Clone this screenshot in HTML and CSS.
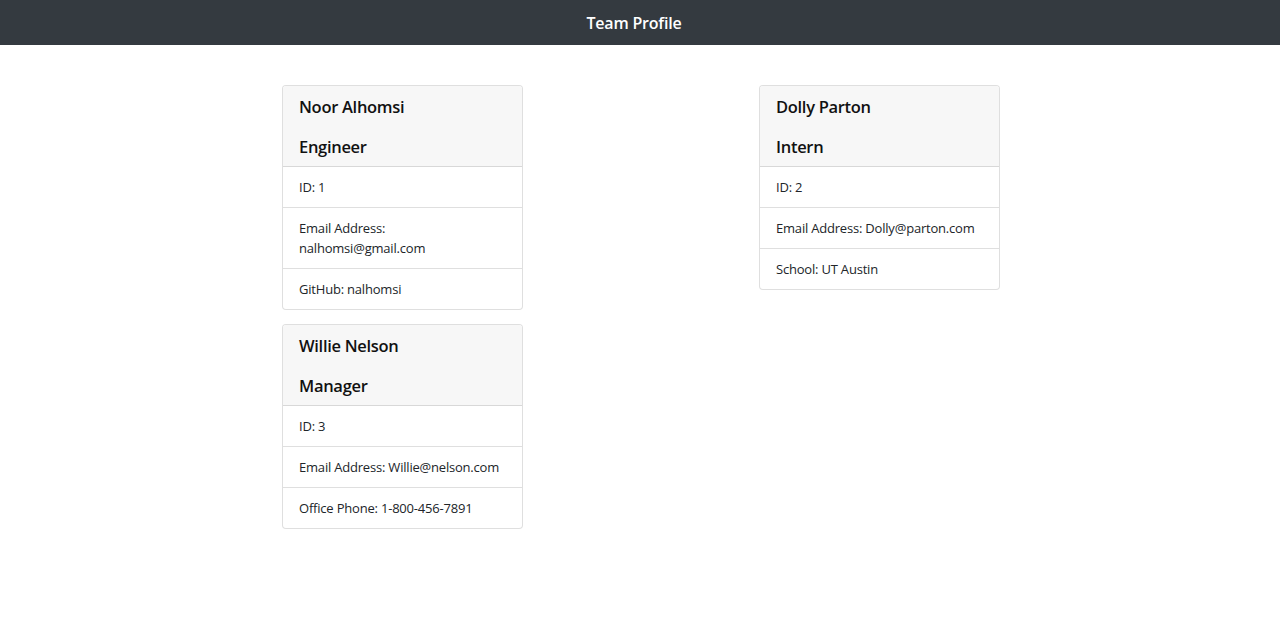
FILE: index.html
```html
<!DOCTYPE html>
<html lang="en">
<head>
<meta charset="utf-8">
<title>Team Profile</title>
<link rel="stylesheet" href="styles.css">
</head>
<body>
<header class="navbar">
  <h1 class="navbar-title">Team Profile</h1>
</header>
<main class="team">
  <div class="column">
    <section class="card">
      <div class="card-header">
        <h2 class="card-title">Noor Alhomsi</h2>
        <h3 class="card-role">Engineer</h3>
      </div>
      <ul class="list">
        <li class="list-item">ID: 1</li>
        <li class="list-item">Email Address: nalhomsi@gmail.com</li>
        <li class="list-item">GitHub: nalhomsi</li>
      </ul>
    </section>
    <section class="card">
      <div class="card-header">
        <h2 class="card-title">Willie Nelson</h2>
        <h3 class="card-role">Manager</h3>
      </div>
      <ul class="list">
        <li class="list-item">ID: 3</li>
        <li class="list-item">Email Address: Willie@nelson.com</li>
        <li class="list-item">Office Phone: 1-800-456-7891</li>
      </ul>
    </section>
  </div>
  <div class="column">
    <section class="card">
      <div class="card-header">
        <h2 class="card-title">Dolly Parton</h2>
        <h3 class="card-role">Intern</h3>
      </div>
      <ul class="list">
        <li class="list-item">ID: 2</li>
        <li class="list-item">Email Address: Dolly@parton.com</li>
        <li class="list-item">School: UT Austin</li>
      </ul>
    </section>
  </div>
</main>
</body>
</html>
```

FILE: styles.css
```css
* { box-sizing: border-box; }
html, body { margin: 0; padding: 0; }
body {
  font-family: "Segoe UI", "Open Sans", "Noto Sans", sans-serif;
  font-size: 14px;
  line-height: 20px;
  color: #212529;
  background: #fff;
}
.navbar {
  height: 45px;
  background: #343a40;
  display: flex;
  align-items: center;
  justify-content: center;
}
.navbar-title {
  margin: 0 12px 0 0;
  font-size: 16px;
  font-weight: 600;
  letter-spacing: -0.2px;
  color: #fff;
  line-height: 24px;
}
.team {
  width: 718px;
  margin: 40px 0 0 calc(50% - 358px);
  display: flex;
  justify-content: space-between;
  align-items: flex-start;
}
.column {
  width: 241px;
  display: flex;
  flex-direction: column;
  gap: 14px;
}
.card {
  border: 1px solid rgba(0, 0, 0, 0.125);
  border-radius: 4px;
  overflow: hidden;
  background: #fff;
}
.card-header {
  background: #f7f7f7;
  padding: 11px 16px 9px;
  border-bottom: 1px solid rgba(0, 0, 0, 0.125);
  display: flex;
  flex-direction: column;
  gap: 20px;
}
.card-title, .card-role {
  margin: 0;
  font-size: 16.5px;
  font-weight: 600;
  letter-spacing: -0.3px;
  line-height: 20px;
  color: #111;
}
.list { list-style: none; margin: 0; padding: 0; }
.list-item {
  padding: 10px 16px;
  border-bottom: 1px solid rgba(0, 0, 0, 0.125);
  font-size: 13px;
  letter-spacing: -0.2px;
}
.list-item:last-child { border-bottom: 0; }
```
